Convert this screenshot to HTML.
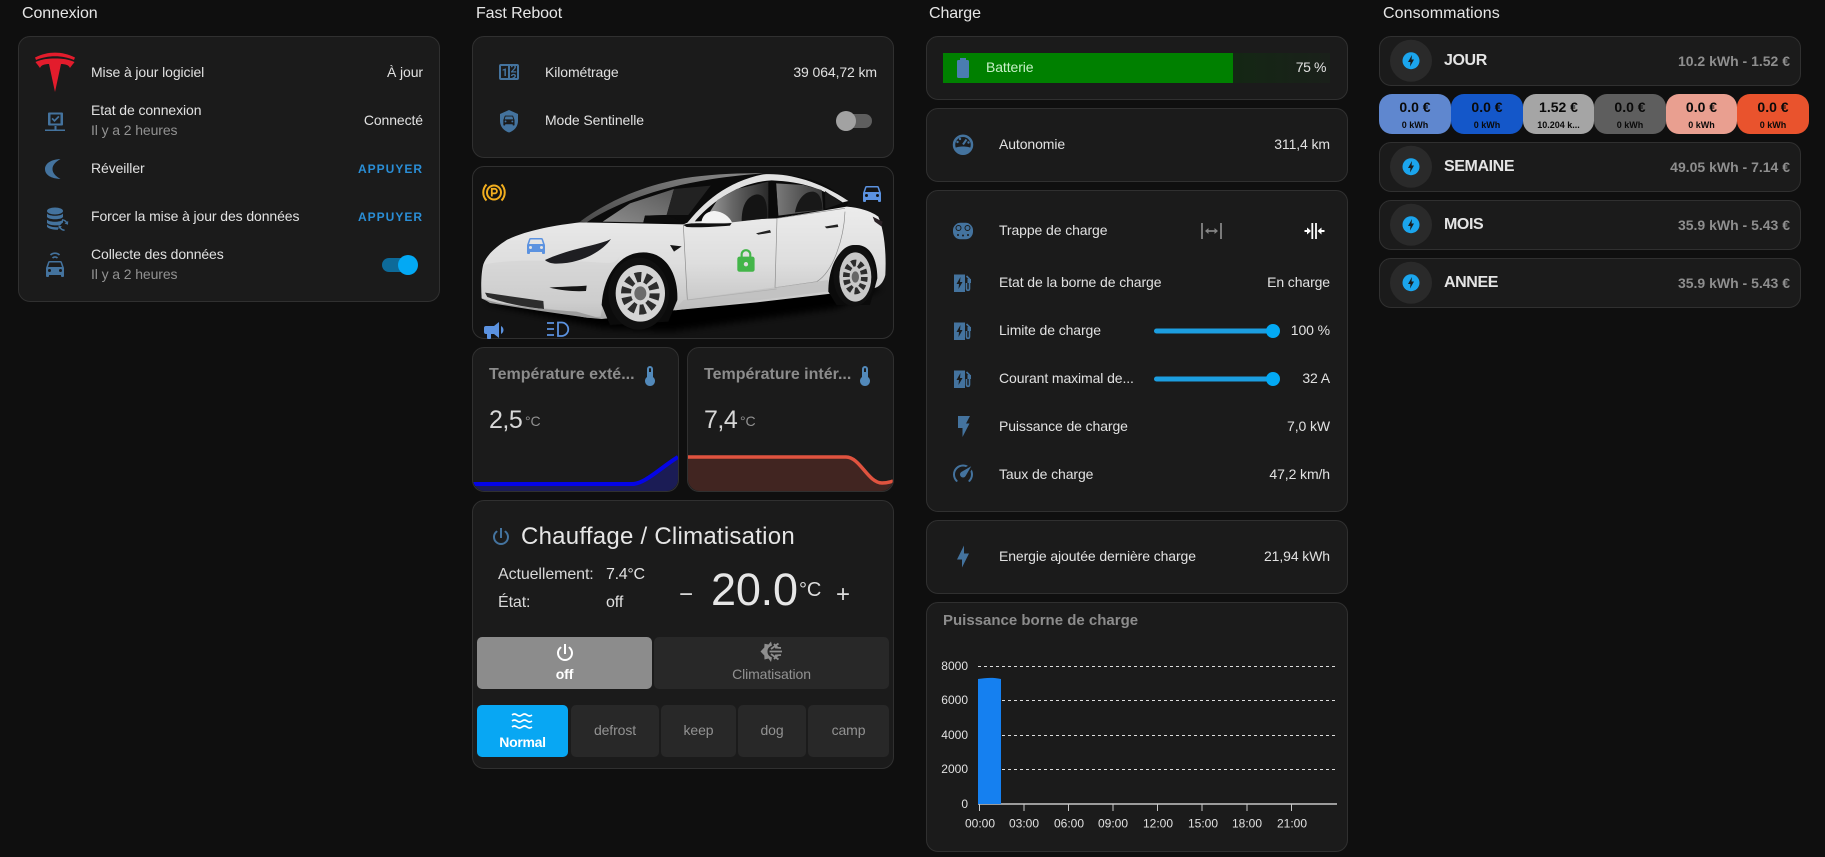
<!DOCTYPE html>
<html lang="fr"><head><meta charset="utf-8"><title>Tesla</title>
<style>
html,body{margin:0;padding:0;background:#0f0f0f}
body{position:relative;width:1825px;height:857px;overflow:hidden;font-family:"Liberation Sans",Arial,sans-serif;color:#e1e1e1}
.c{position:absolute;box-sizing:border-box;background:#1b1b1b;border:1px solid #303030;border-radius:12px}
.t{position:absolute;white-space:nowrap;line-height:20px;font-size:14px;height:20px;letter-spacing:-.1px}
.h{font-size:16px;color:#e6e6e6}
.g{color:#929292}
.b{font-size:12px;font-weight:bold;color:#2a8ed6;letter-spacing:1px}
.tt{font-size:16px;font-weight:bold;color:#8c8c8c;letter-spacing:0}
.ct{text-align:center}
.btn{position:absolute;border-radius:5px;background:#282828}
.n{font-size:16px;font-weight:bold;color:#e4e4e4;letter-spacing:-.4px}
.rv{font-size:14px;font-weight:bold;color:#8e8e8e;letter-spacing:0}
.pill{position:absolute;top:94px;height:40px;border-radius:13px;color:#0a0a0a;text-align:center}
.pill b{position:absolute;left:0;right:0;top:3px;font-size:14px;line-height:20px}
.pill span{position:absolute;left:0;right:0;top:24px;font-size:9px;font-weight:bold;line-height:14px}
svg{position:absolute;left:0;top:0}
</style></head><body>

<div class="t h" style="left:22px;top:4px">Connexion</div>
<div class="t h" style="left:476px;top:4px">Fast Reboot</div>
<div class="t h" style="left:929px;top:4px">Charge</div>
<div class="t h" style="left:1383px;top:4px;letter-spacing:.1px">Consommations</div>

<!-- cards -->
<div class="c" style="left:18px;top:36px;width:422px;height:266px"></div>
<div class="c" style="left:472px;top:36px;width:422px;height:122px"></div>
<div class="c" style="left:472px;top:166px;width:422px;height:173px;background:#131313"></div>
<div class="c" style="left:472px;top:347px;width:207px;height:145px"></div>
<div class="c" style="left:687px;top:347px;width:207px;height:145px"></div>
<div class="c" style="left:472px;top:500px;width:422px;height:269px"></div>
<div class="c" style="left:926px;top:36px;width:422px;height:64px"></div>
<div class="c" style="left:926px;top:108px;width:422px;height:74px"></div>
<div class="c" style="left:926px;top:190px;width:422px;height:322px"></div>
<div class="c" style="left:926px;top:520px;width:422px;height:74px"></div>
<div class="c" style="left:926px;top:602px;width:422px;height:250px"></div>
<div class="c" style="left:1379px;top:36px;width:422px;height:50px"></div>
<div class="c" style="left:1379px;top:142px;width:422px;height:50px"></div>
<div class="c" style="left:1379px;top:200px;width:422px;height:50px"></div>
<div class="c" style="left:1379px;top:258px;width:422px;height:50px"></div>

<!-- battery bar -->
<div style="position:absolute;left:943px;top:53px;width:290px;height:30px;background:#008000"></div>
<div style="position:absolute;left:1233px;top:53px;width:97px;height:30px;background:linear-gradient(90deg,#142714,#1a201a)"></div>

<!-- climate buttons -->
<div class="btn" style="left:477px;top:637px;width:175px;height:52px;background:#8c8c8c"></div>
<div class="btn" style="left:654px;top:637px;width:235px;height:52px"></div>
<div class="btn" style="left:477px;top:705px;width:91px;height:52px;background:#08a7f3"></div>
<div class="btn" style="left:571px;top:705px;width:88px;height:52px"></div>
<div class="btn" style="left:661px;top:705px;width:75px;height:52px"></div>
<div class="btn" style="left:738px;top:705px;width:68px;height:52px"></div>
<div class="btn" style="left:808px;top:705px;width:81px;height:52px"></div>

<!-- pills -->
<div class="pill" style="left:1379px;width:72px;background:#5f87cf"><b>0.0 €</b><span>0 kWh</span></div>
<div class="pill" style="left:1451px;width:72px;background:#1457c9"><b>0.0 €</b><span>0 kWh</span></div>
<div class="pill" style="left:1523px;width:71px;background:#a5a5a5"><b>1.52 €</b><span>10.204 k...</span></div>
<div class="pill" style="left:1594px;width:72px;background:#5e5e5e"><b>0.0 €</b><span>0 kWh</span></div>
<div class="pill" style="left:1666px;width:71px;background:#e99f90"><b>0.0 €</b><span>0 kWh</span></div>
<div class="pill" style="left:1737px;width:72px;background:#e9532d"><b>0.0 €</b><span>0 kWh</span></div>

<svg width="1825" height="857" viewBox="0 0 1825 857">
<defs>
<linearGradient id="bd" x1="0" y1="0" x2="0" y2="1"><stop offset="0" stop-color="#ececec"/><stop offset=".5" stop-color="#dedede"/><stop offset=".85" stop-color="#c8c8c8"/><stop offset="1" stop-color="#a8a8a8"/></linearGradient>
<linearGradient id="gl" x1="0" y1="1" x2="1" y2="0"><stop offset="0" stop-color="#8c8c8c"/><stop offset="1" stop-color="#5a5a5a"/></linearGradient>
<linearGradient id="gl2" x1="0" y1="0" x2="1" y2="0"><stop offset="0" stop-color="#a6a6a6"/><stop offset=".45" stop-color="#666"/><stop offset="1" stop-color="#2a2a2a"/></linearGradient>
<linearGradient id="gl3" x1="0" y1="0" x2="1" y2="0"><stop offset="0" stop-color="#7a7a7a"/><stop offset=".6" stop-color="#505050"/><stop offset="1" stop-color="#3a3a3a"/></linearGradient>
<linearGradient id="rf" x1="0" y1="1" x2="1" y2="0"><stop offset="0" stop-color="#4a4a4a"/><stop offset="1" stop-color="#8a8a8a"/></linearGradient>
<filter id="bl"><feGaussianBlur stdDeviation="10"/></filter>
<clipPath id="cc"><rect x="473" y="167" width="420" height="171" rx="12"/></clipPath>
<clipPath id="tc1"><rect x="473" y="348" width="205" height="143" rx="12"/></clipPath>
<clipPath id="tc2"><rect x="688" y="348" width="205" height="143" rx="12"/></clipPath>
</defs>

<!-- Tesla logo -->
<path fill="#e31c2c" d="M35,57.500C48,51 62,51 75,57.500L74,60C62,55 48,55 36,60Z"/>
<path fill="#e31c2c" d="M55,92L61,64C65,64 69,65 70,68C72,65 74,63 74.500,62C68,59 62,58.500 55,58.500C48,58.500 42,59 35.500,62C36,63 38,65 40,68C41,65 45,64 49,64Z"/>

<!-- connection -->
<g fill="#44739e">
<path fill-rule="evenodd" d="M49,112.500h13a1,1 0 0 1 1,1v11a1,1 0 0 1-1,1h-13a1,1 0 0 1-1-1v-11a1,1 0 0 1 1-1zM50.500,114.500v9h10v-9z"/>
<path d="M51.500,119l1.200-1.200 1.800,1.800 3.800-3.800 1.200,1.200-5,5zM54.500,126h2v3.500h-2zM45,129.500h20v1.500h-20z"/>
<path d="M60.500,159C51,159.500 45,163.500 45,169C45,175 51,178.500 60.500,179C55.500,176 52.500,173 52.500,169C52.500,165 55.500,162 60.500,159Z"/>
<ellipse cx="55" cy="211" rx="8" ry="3.500"/>
<path d="M47,213.500c2,3 14,3 16,0v3.500c-2,3-14,3-16,0zM47,219.500c2,3 14,3 16,0v3c-1,.5-2,1.500-2.500,2.500c-4,.8-11,.5-13.500-2zM47,224.500c2,2 6,2.800 11,2.800v2.500c-5,0-9.500-1-11-3z"/>
<path d="M62,220.500a4.800,4.800 0 0 1 3.800,2.200l-1.300,.8 3.500,1.200 .2-3.700-1.200,.8a6.300,6.300 0 0 0-5-2.700zM62,226.500l-3.400-1.200-.2,3.700 1.200-.8a6.300,6.300 0 0 0 5,2.700v-1.400a4.800,4.800 0 0 1-3.800-2.200z" />
</g>
<g transform="translate(43,256)" fill="#44739e"><path d="M5,11L6.500,6.500H17.500L19,11M17.500,16A1.500,1.500 0 0,1 16,14.500A1.500,1.500 0 0,1 17.500,13A1.500,1.500 0 0,1 19,14.500A1.500,1.500 0 0,1 17.500,16M6.500,16A1.500,1.500 0 0,1 5,14.500A1.500,1.500 0 0,1 6.500,13A1.500,1.500 0 0,1 8,14.500A1.500,1.500 0 0,1 6.500,16M18.920,6C18.720,5.420 18.160,5 17.500,5H6.500C5.840,5 5.280,5.420 5.080,6L3,12V20A1,1 0 0,0 4,21H5A1,1 0 0,0 6,20V19H18V20A1,1 0 0,0 19,21H20A1,1 0 0,0 21,20V12L18.920,6Z"/></g>
<path d="M50.500,255a6.500,6.500 0 0 1 9,0M52.500,258a3.500,3.500 0 0 1 5,0" fill="none" stroke="#44739e" stroke-width="1.700"/>

<!-- toggles -->
<rect x="382" y="258" width="32" height="14" rx="7" fill="#0d6a99"/><circle cx="408" cy="265" r="10" fill="#03a9f4"/>
<rect x="846" y="114" width="26" height="14" rx="7" fill="#5e5e5e"/><circle cx="846" cy="121" r="10" fill="#a2a2a2"/>

<!-- counter -->
<g transform="translate(497,60)" fill="#44739e"><path d="M4,4H20A2,2 0 0,1 22,6V18A2,2 0 0,1 20,20H4A2,2 0 0,1 2,18V6A2,2 0 0,1 4,4M4,6V18H11V6H4M20,18V6H18.760C19,6.540 18.950,7.070 18.950,7.130C18.880,7.800 18.410,8.500 18.240,8.750L15.910,11.300L19.230,11.280L19.240,12.500L14.040,12.470L14,11.470C14,11.470 17.050,8.240 17.200,7.950C17.340,7.670 17.910,6 16.500,6C15.270,6.050 15.410,7.300 15.410,7.300L13.870,7.310C13.870,7.310 13.880,6.650 14.250,6H13V18H15.580L15.570,17.140L16.540,17.130C16.540,17.130 17.450,16.970 17.460,16.080C17.500,15.080 16.650,15.080 16.500,15.080C16.370,15.080 15.430,15.130 15.430,15.950H13.910C13.910,15.950 13.950,13.890 16.500,13.890C19.100,13.890 18.960,15.910 18.960,15.910C18.960,15.910 19,17.160 17.850,17.630L18.370,18H20M8.920,16H7.420V10.200L5.620,10.760V9.530L8.760,8.410H8.920V16Z"/></g>
<!-- shield car -->
<path fill="#44739e" d="M509,110L500,114V121C500,126.500 504,131 509,132.500C514,131 518,126.500 518,121V114Z"/>
<g transform="translate(501.500,112.500) scale(.62)" fill="#1b1b1b"><path d="M5,11L6.500,6.500H17.500L19,11M17.500,16A1.500,1.500 0 0,1 16,14.500A1.500,1.500 0 0,1 17.500,13A1.500,1.500 0 0,1 19,14.500A1.500,1.500 0 0,1 17.500,16M6.500,16A1.500,1.500 0 0,1 5,14.500A1.500,1.500 0 0,1 6.500,13A1.500,1.500 0 0,1 8,14.500A1.500,1.500 0 0,1 6.500,16M18.920,6C18.720,5.420 18.160,5 17.500,5H6.500C5.840,5 5.280,5.420 5.080,6L3,12V20A1,1 0 0,0 4,21H5A1,1 0 0,0 6,20V19H18V20A1,1 0 0,0 19,21H20A1,1 0 0,0 21,20V12L18.920,6Z"/></g>

<!-- car -->
<g clip-path="url(#cc)">
<g transform="translate(470,165) scale(.33333)">
<path d="M40 415L400 490L600 500L1100 430L1240 370L1000 360L300 400Z" fill="#040404" filter="url(#bl)"/>
<!-- greenhouse black -->
<path d="M330 172C420 100 530 62 640 42C760 24 900 20 1000 38C1060 50 1110 85 1135 112L1125 135L920 165L640 180Z" fill="#0b0b0b"/>
<path d="M330 170C420 102 530 60 640 40C720 28 800 24 880 25C760 34 640 52 530 88C450 115 390 145 350 172Z" fill="url(#rf)"/>
<!-- body -->
<path d="M35 400C32 360 34 320 40 298C50 270 75 248 110 225C170 195 260 180 330 172L640 178L660 170L920 160L1130 125C1170 128 1205 140 1225 155C1240 190 1250 250 1246 330C1240 355 1225 368 1210 370L1090 385L860 412L610 436L590 442L395 462L350 458L200 432L60 412Z" fill="url(#bd)"/>
<path d="M40 300C90 285 200 285 350 290C420 295 440 300 450 270C430 330 400 400 392 455L350 458L300 440C230 430 150 420 60 412L35 400Z" fill="#d2d2d2" opacity=".55"/>
<!-- windshield -->
<path d="M398 170L480 115L612 72L590 150L525 152L520 172Z" fill="url(#gl)"/>
<path d="M612 72L722 62L655 150L590 150Z" fill="#222"/>
<path d="M525 152L590 150L640 172L520 172Z" fill="#0c0c0c"/>
<!-- A pillar + roof -->
<path d="M645 182C700 112 770 50 880 28C950 24 1040 44 1135 108L1118 112C1060 72 1000 50 905 46C805 52 722 112 672 172Z" fill="#e2e2e2"/>
<!-- side windows -->
<path d="M700 172L742 105L800 72L895 50L895 160L785 172Z" fill="url(#gl2)"/>
<path d="M815 168C815 130 825 95 860 88C885 88 892 110 892 160Z" fill="#141414"/>
<path d="M918 55L1000 60L1055 75L1060 135L925 152Z" fill="url(#gl3)"/>
<path d="M975 142C980 110 1000 78 1030 80C1052 84 1056 110 1058 134Z" fill="#181818"/>
<path d="M1065 78L1116 114L1066 132Z" fill="#1a1a1a"/>
<path d="M897 48H918L925 155L895 160Z" fill="#0a0a0a"/>
<path d="M640 180C660 170 720 178 785 174L780 182C730 186 690 188 650 186Z" fill="#111"/>
<path d="M694 174C696 152 710 138 735 138C758 140 778 155 786 172Z" fill="#f3f3f3"/>
<path d="M225 285C300 250 390 240 423 222C400 255 340 295 260 296C245 296 232 292 225 285Z" fill="#1e1e22"/>
<path d="M238 368C280 378 320 380 348 378L350 362C310 365 270 365 238 368Z" fill="#151515"/>
<path d="M45 383L220 408L222 432C150 425 90 410 52 396Z" fill="#2c2c2c"/>
<path d="M38 400C90 420 200 432 320 440L392 460L350 458L200 436L60 414Z" fill="#9c9c9c"/>
<path d="M600 240L635 244L612 260Z" fill="#151515"/>
<path d="M858 205L900 195L903 203L865 209Z M1064 185L1103 178L1105 186L1070 190Z" fill="#222"/>
<path d="M1208 155L1238 170L1234 184L1214 170Z" fill="#2a2226"/>
<path d="M640 180L652 405M921 160L915 370M921 160L1125 130M1125 140C1122 220 1090 320 1040 350L915 368M652 405L920 372" stroke="#8b8b8b" stroke-width="2" fill="none"/>
<path d="M615 436L1085 378L1075 345L640 405Z" fill="#bdbdbd" opacity=".7"/>
<!-- front wheel -->
<path d="M395 420C400 330 450 262 520 262C590 262 625 330 622 405L595 470L420 480Z" fill="#0b0b0b"/>
<ellipse cx="506" cy="386" rx="91" ry="108" fill="#101010"/>
<ellipse cx="511" cy="385" rx="74" ry="85" fill="#d4d4d4"/>
<ellipse cx="511" cy="385" rx="43" ry="49" fill="none" stroke="#2c2c2c" stroke-width="30" pathLength="100" stroke-dasharray="6 4"/>
<ellipse cx="511" cy="385" rx="18" ry="21" fill="#6a6a6a"/>
<!-- rear wheel -->
<path d="M1075 380C1075 300 1110 240 1160 240C1205 240 1222 290 1222 340L1200 420H1100Z" fill="#0b0b0b"/>
<ellipse cx="1152" cy="332" rx="62" ry="92" fill="#101010"/>
<ellipse cx="1156" cy="336" rx="48" ry="74" fill="#c8c8c8"/>
<ellipse cx="1156" cy="336" rx="27" ry="42" fill="none" stroke="#2c2c2c" stroke-width="20" pathLength="100" stroke-dasharray="6 4"/>
<ellipse cx="1156" cy="336" rx="11" ry="17" fill="#666"/>
</g>
</g>

<!-- car icons -->
<g transform="translate(524,233)" fill="#5b92e0"><path d="M5,11L6.500,6.500H17.500L19,11M17.500,16A1.500,1.500 0 0,1 16,14.500A1.500,1.500 0 0,1 17.500,13A1.500,1.500 0 0,1 19,14.500A1.500,1.500 0 0,1 17.500,16M6.500,16A1.500,1.500 0 0,1 5,14.500A1.500,1.500 0 0,1 6.500,13A1.500,1.500 0 0,1 8,14.500A1.500,1.500 0 0,1 6.500,16M18.920,6C18.720,5.420 18.160,5 17.500,5H6.500C5.840,5 5.280,5.420 5.080,6L3,12V20A1,1 0 0,0 4,21H5A1,1 0 0,0 6,20V19H18V20A1,1 0 0,0 19,21H20A1,1 0 0,0 21,20V12L18.920,6Z"/></g>
<g transform="translate(860,181)" fill="#5b92e0"><path d="M5,11L6.500,6.500H17.500L19,11M17.500,16A1.500,1.500 0 0,1 16,14.500A1.500,1.500 0 0,1 17.500,13A1.500,1.500 0 0,1 19,14.500A1.500,1.500 0 0,1 17.500,16M6.500,16A1.500,1.500 0 0,1 5,14.500A1.500,1.500 0 0,1 6.500,13A1.500,1.500 0 0,1 8,14.500A1.500,1.500 0 0,1 6.500,16M18.920,6C18.720,5.420 18.160,5 17.500,5H6.500C5.840,5 5.280,5.420 5.080,6L3,12V20A1,1 0 0,0 4,21H5A1,1 0 0,0 6,20V19H18V20A1,1 0 0,0 19,21H20A1,1 0 0,0 21,20V12L18.920,6Z"/></g>
<g transform="translate(733,248)" fill="#43b549"><path transform="scale(1.080)" d="M12,17A2,2 0 0,0 14,15C14,13.890 13.100,13 12,13A2,2 0 0,0 10,15A2,2 0 0,0 12,17M18,8A2,2 0 0,1 20,10V20A2,2 0 0,1 18,22H6A2,2 0 0,1 4,20V10C4,8.890 4.900,8 6,8H7V6A5,5 0 0,1 12,1A5,5 0 0,1 17,6V8H18M12,3A3,3 0 0,0 9,6V8H15V6A3,3 0 0,0 12,3Z"/></g>
<g fill="none" stroke="#f2ae1e" stroke-width="2">
<circle cx="494" cy="192.500" r="7"/>
<path d="M486.500,184.500a11.500,11.500 0 0 0 0,16M501.500,184.500a11.500,11.500 0 0 1 0,16"/>
<path d="M491.800,196.500V188.800h2.800a2.200,2.200 0 0 1 0,4.600h-2.800" stroke-width="1.800"/>
</g>
<g transform="translate(482,318)" fill="#5b92e0"><path d="M12,8H4A2,2 0 0,0 2,10V14A2,2 0 0,0 4,16H5V20A1,1 0 0,0 6,21H8A1,1 0 0,0 9,20V16H12L17,20V4L12,8M21.500,12C21.500,13.710 20.540,15.260 19,16V8C20.530,8.750 21.500,10.300 21.500,12Z"/></g>
<g fill="none" stroke="#5b92e0" stroke-width="1.800">
<path d="M558,322.500h3.500a6.500,6.500 0 0 1 0,13.500h-3.500zM547,323h7M547,329h7M547,335h7"/>
</g>

<!-- thermometers -->
<g fill="#5289ba"><path transform="translate(638,364)" d="M15 13V5A3 3 0 0 0 9 5V13A5 5 0 1 0 15 13M12 4A1 1 0 0 1 13 5V8H11V5A1 1 0 0 1 12 4Z"/>
<path transform="translate(853,364)" d="M15 13V5A3 3 0 0 0 9 5V13A5 5 0 1 0 15 13M12 4A1 1 0 0 1 13 5V8H11V5A1 1 0 0 1 12 4Z"/></g>

<!-- temp graphs -->
<g clip-path="url(#tc1)">
<path d="M472,484H632C645,484 660,468 678,457V492H472Z" fill="#1b1c55"/>
<path d="M472,484H632C645,484 660,468 678,457" fill="none" stroke="#0505e6" stroke-width="4"/>
</g>
<g clip-path="url(#tc2)">
<path d="M687,457H846C860,457 868,483 882,483C888,483 890,482 893,481V492H687Z" fill="#412521"/>
<path d="M687,457H846C860,457 868,483 882,483C888,483 890,482 893,481" fill="none" stroke="#e0533f" stroke-width="3.500"/>
</g>

<!-- climate icons -->
<path transform="translate(489,525)" fill="#44739e" d="M16.560,5.440L15.110,6.890C16.840,7.940 18,9.830 18,12A6,6 0 0,1 12,18A6,6 0 0,1 6,12C6,9.830 7.160,7.940 8.880,6.880L7.440,5.440C5.360,6.880 4,9.280 4,12A8,8 0 0,0 12,20A8,8 0 0,0 20,12C20,9.280 18.640,6.880 16.560,5.440M13,3H11V13H13"/>
<path transform="translate(553,641)" fill="#fff" d="M16.560,5.440L15.110,6.890C16.840,7.940 18,9.830 18,12A6,6 0 0,1 12,18A6,6 0 0,1 6,12C6,9.830 7.160,7.940 8.880,6.880L7.440,5.440C5.360,6.880 4,9.280 4,12A8,8 0 0,0 12,20A8,8 0 0,0 20,12C20,9.280 18.640,6.880 16.560,5.440M13,3H11V13H13"/>
<path fill="#8e8e8e" d="M771,641.500L768.500,644.500L764.500,643.800L764.300,647.500L760.500,651.500L764.300,655.500L764.500,659.500L768.500,658.500L771,662L772,657.500C768.500,656 767.500,654 767.500,651.500C767.500,649 768.500,647 772,645.500Z"/>
<g stroke="#8e8e8e" fill="none" stroke-width="1.800">
<path d="M769.500,651.500H782M771,649L778.500,643.500M771,654L778.500,659.500M775,647.500L781,648M775,655.500L781,655M774,644L778,648M774,659L778,655"/>
</g>
<g stroke="#fff" stroke-width="1.600" fill="none">
<path d="M512,715q2.500,-2 5,0t5,0t5,0t5,0M512,721q2.500,-2 5,0t5,0t5,0t5,0M512,727q2.500,-2 5,0t5,0t5,0t5,0"/>
</g>

<!-- battery, gauges etc -->
<path transform="translate(951,56)" fill="#4a7db0" d="M16.670,4H15V2H9V4H7.330A1.330,1.330 0 0,0 6,5.330V20.670C6,21.400 6.600,22 7.330,22H16.670A1.330,1.330 0 0,0 18,20.670V5.330C18,4.600 17.400,4 16.670,4Z"/>
<circle cx="963" cy="144.800" r="9" fill="none" stroke="#44739e" stroke-width="2.500"/>
<path fill="#44739e" d="M955,148C958,146 968,146 971,148C970,152 966,153.500 963,153.500C960,153.500 956,152 955,148Z"/>
<path d="M963,144.500L966.500,139.500" stroke="#44739e" stroke-width="2"/><circle cx="957.500" cy="142" r="1.200" fill="#44739e"/><circle cx="960" cy="139" r="1.200" fill="#44739e"/><circle cx="968.500" cy="142.500" r="1.200" fill="#44739e"/>
<!-- type2 plug -->
<rect x="953" y="222.800" width="20" height="16.500" rx="7.500" fill="#44739e"/>
<g fill="none" stroke="#1b1b1b" stroke-width="1"><circle cx="958.500" cy="228" r="2.500"/><circle cx="967.500" cy="228" r="2.500"/></g>
<g fill="#1b1b1b"><circle cx="958" cy="235" r="1"/><circle cx="963" cy="235.500" r="1"/><circle cx="968" cy="235" r="1"/></g>
<!-- trappe arrows -->
<g stroke="#848484" stroke-width="1.800" fill="none"><path d="M1202,223V239M1221,223V239M1206,231H1217"/></g>
<path d="M1205,231l3.500-3v6zM1218,231l-3.500-3v6z" fill="#848484"/>
<g stroke="#fff" stroke-width="1.800" fill="none"><path d="M1312.300,223V239M1316,223V239"/><path d="M1304.500,231H1309M1319.500,231H1324.500" stroke-width="2"/></g>
<path d="M1311,231l-4-3.500v7zM1317.500,231l4-3.500v7z" fill="#fff"/>
<!-- ev station icons -->
<g id="ev">
<g transform="translate(951,271)"><path fill="#44739e" d="M3,3.500H14V21H3Z"/><path fill="#1b1b1b" d="M9.500,6L5.500,13H8L7.500,18L11.500,11H9Z"/><path fill="none" stroke="#44739e" stroke-width="1.600" d="M15.500,5L18.500,8V17.500C18.500,20 15.500,20 15.500,17.500V12"/><rect x="16.500" y="8" width="3.500" height="4" fill="#44739e"/></g>
<g transform="translate(951,319)"><path fill="#44739e" d="M3,3.500H14V21H3Z"/><path fill="#1b1b1b" d="M9.500,6L5.500,13H8L7.500,18L11.500,11H9Z"/><path fill="none" stroke="#44739e" stroke-width="1.600" d="M15.500,5L18.500,8V17.500C18.500,20 15.500,20 15.500,17.500V12"/><rect x="16.500" y="8" width="3.500" height="4" fill="#44739e"/></g>
<g transform="translate(951,367)"><path fill="#44739e" d="M3,3.500H14V21H3Z"/><path fill="#1b1b1b" d="M9.500,6L5.500,13H8L7.500,18L11.500,11H9Z"/><path fill="none" stroke="#44739e" stroke-width="1.600" d="M15.500,5L18.500,8V17.500C18.500,20 15.500,20 15.500,17.500V12"/><rect x="16.500" y="8" width="3.500" height="4" fill="#44739e"/></g>
</g>
<path fill="#44739e" d="M958,416H970L966,423.500H969.500L962.500,437V428H958Z"/>
<path transform="translate(951,461.500)" fill="#44739e" d="M12,16A3,3 0 0,1 9,13C9,11.880 9.610,10.900 10.500,10.390L20.210,4.770L14.680,14.350C14.180,15.330 13.170,16 12,16M12,3C13.810,3 15.500,3.500 16.970,4.320L14.870,5.530C14,5.190 13,5 12,5A8,8 0 0,0 4,13C4,15.210 4.890,17.210 6.340,18.650H6.350C6.740,19.040 6.740,19.670 6.350,20.060C5.960,20.450 5.320,20.450 4.930,20.070V20.070C3.120,18.260 2,15.760 2,13A10,10 0 0,1 12,3M22,13C22,15.760 20.880,18.260 19.070,20.070V20.070C18.680,20.450 18.050,20.450 17.660,20.060C17.270,19.670 17.270,19.040 17.660,18.650V18.650C19.110,17.200 20,15.210 20,13C20,12 19.810,11 19.460,10.100L20.670,8C21.500,9.500 22,11.140 22,13Z"/>
<path transform="translate(951,544.500)" fill="#44739e" d="M11 15H6L13 1V9H18L11 23V15Z"/>

<!-- sliders -->
<rect x="1154" y="328.500" width="119" height="5" rx="2.500" fill="#1c9ee0"/><circle cx="1273" cy="331" r="7" fill="#03a9f4"/>
<rect x="1154" y="376.500" width="119" height="5" rx="2.500" fill="#1c9ee0"/><circle cx="1273" cy="379" r="7" fill="#03a9f4"/>

<!-- chart -->
<g stroke="#dcdcdc" stroke-width="1" stroke-dasharray="3 3" fill="none">
<path d="M978,666.500H1337M1002,700.500H1337M1002,735.500H1337M1002,769.500H1337"/></g>
<path d="M978,804H1337" stroke="#c8c8c8" stroke-width="1.500"/>
<path d="M978,679C985,678 992,677 1001,679V804H978Z" fill="#1580f0"/>
<g stroke="#c8c8c8"><path d="M979.500,804v7M1024,804v7M1068.500,804v7M1113,804v7M1157.500,804v7M1202,804v7M1247,804v7M1291.500,804v7"/></g>
<g font-family="'Liberation Sans',Arial,sans-serif" font-size="12" fill="#e0e0e0" text-anchor="end">
<text x="968" y="670">8000</text><text x="968" y="704">6000</text><text x="968" y="739">4000</text><text x="968" y="773">2000</text><text x="968" y="808">0</text>
</g>
<g font-family="'Liberation Sans',Arial,sans-serif" font-size="12" fill="#e0e0e0" text-anchor="middle">
<text x="980" y="827.500">00:00</text><text x="1024" y="827.500">03:00</text><text x="1069" y="827.500">06:00</text><text x="1113" y="827.500">09:00</text><text x="1158" y="827.500">12:00</text><text x="1203" y="827.500">15:00</text><text x="1247" y="827.500">18:00</text><text x="1292" y="827.500">21:00</text>
</g>

<!-- conso icons -->
<g id="ci">
<circle cx="1411" cy="60.700" r="21" fill="#2a2a2a"/><circle cx="1411" cy="60.700" r="8.500" fill="#1ba5ed"/><path d="M1412,55L1408,62H1410.500L1410,66.500L1414,59.500H1411.500Z" fill="#1b1b1b"/>
<circle cx="1411" cy="166.700" r="21" fill="#2a2a2a"/><circle cx="1411" cy="166.700" r="8.500" fill="#1ba5ed"/><path d="M1412,161L1408,168H1410.500L1410,172.500L1414,165.500H1411.500Z" fill="#1b1b1b"/>
<circle cx="1411" cy="224.700" r="21" fill="#2a2a2a"/><circle cx="1411" cy="224.700" r="8.500" fill="#1ba5ed"/><path d="M1412,219L1408,226H1410.500L1410,230.500L1414,223.500H1411.500Z" fill="#1b1b1b"/>
<circle cx="1411" cy="282.700" r="21" fill="#2a2a2a"/><circle cx="1411" cy="282.700" r="8.500" fill="#1ba5ed"/><path d="M1412,277L1408,284H1410.500L1410,288.500L1414,281.500H1411.500Z" fill="#1b1b1b"/>
</g>
</svg>

<!-- col 1 text -->
<div class="t" style="left:91px;top:62px">Mise à jour logiciel</div>
<div class="t" style="right:1402px;top:62px">À jour</div>
<div class="t" style="left:91px;top:100px">Etat de connexion</div>
<div class="t g" style="left:91px;top:120px">Il y a 2 heures</div>
<div class="t" style="right:1402px;top:110px">Connecté</div>
<div class="t" style="left:91px;top:158px">Réveiller</div>
<div class="t b" style="right:1402px;top:158.500px">APPUYER</div>
<div class="t" style="left:91px;top:206px">Forcer la mise à jour des données</div>
<div class="t b" style="right:1402px;top:206.500px">APPUYER</div>
<div class="t" style="left:91px;top:244px">Collecte des données</div>
<div class="t g" style="left:91px;top:264px">Il y a 2 heures</div>

<!-- col 2 text -->
<div class="t" style="left:545px;top:62px">Kilométrage</div>
<div class="t" style="right:948px;top:62px">39 064,72 km</div>
<div class="t" style="left:545px;top:110px">Mode Sentinelle</div>
<div class="t tt" style="left:489px;top:365px">Température exté...</div>
<div class="t tt" style="left:704px;top:365px">Température intér...</div>
<div class="t" style="left:489px;top:409px;font-size:25px;line-height:22px;height:22px;color:#d8d8d8;letter-spacing:-.5px">2,5</div>
<div class="t g" style="left:525px;top:411px">°C</div>
<div class="t" style="left:704px;top:409px;font-size:25px;line-height:22px;height:22px;color:#d8d8d8;letter-spacing:-.5px">7,4</div>
<div class="t g" style="left:740px;top:411px">°C</div>
<div class="t" style="left:521px;top:522px;font-size:24px;line-height:30px;height:30px;color:#e6e6e6;letter-spacing:.25px">Chauffage / Climatisation</div>
<div class="t" style="left:498px;top:565px;font-size:16px;color:#d8d8d8">Actuellement:</div>
<div class="t" style="left:606px;top:565px;font-size:16px;letter-spacing:-.3px">7.4°C</div>
<div class="t" style="left:498px;top:593px;font-size:16px;color:#d8d8d8">État:</div>
<div class="t" style="left:606px;top:593px;font-size:16px">off</div>
<div class="t" style="left:679px;top:580px;font-size:24px;line-height:30px;height:30px;color:#ddd">−</div>
<div class="t" style="left:711px;top:565px;font-size:45px;line-height:50px;height:50px;color:#e6e6e6;letter-spacing:-.2px">20.0</div>
<div class="t" style="left:799px;top:578px;font-size:20px;line-height:24px;height:24px;color:#ddd">°C</div>
<div class="t" style="left:836px;top:580px;font-size:24px;line-height:30px;height:30px;color:#ddd">+</div>
<div class="t ct" style="left:477px;width:175px;top:664px;color:#fff;font-weight:bold">off</div>
<div class="t ct g" style="left:654px;width:235px;top:664px">Climatisation</div>
<div class="t ct" style="left:477px;width:91px;top:732px;color:#fff;font-weight:bold;letter-spacing:-.3px">Normal</div>
<div class="t ct g" style="left:571px;width:88px;top:720px">defrost</div>
<div class="t ct g" style="left:661px;width:75px;top:720px">keep</div>
<div class="t ct g" style="left:738px;width:68px;top:720px">dog</div>
<div class="t ct g" style="left:808px;width:81px;top:720px">camp</div>

<!-- col 3 text -->
<div class="t" style="left:986px;top:57px;color:#c8f0c8">Batterie</div>
<div class="t" style="right:499px;top:57px;letter-spacing:-.4px">75 %</div>
<div class="t" style="left:999px;top:134px">Autonomie</div>
<div class="t" style="right:495px;top:134px">311,4 km</div>
<div class="t" style="left:999px;top:220px">Trappe de charge</div>
<div class="t" style="left:999px;top:272px">Etat de la borne de charge</div>
<div class="t" style="right:495px;top:272px">En charge</div>
<div class="t" style="left:999px;top:320px">Limite de charge</div>
<div class="t" style="right:495px;top:320px">100 %</div>
<div class="t" style="left:999px;top:368px">Courant maximal de...</div>
<div class="t" style="right:495px;top:368px">32 A</div>
<div class="t" style="left:999px;top:416px">Puissance de charge</div>
<div class="t" style="right:495px;top:416px">7,0 kW</div>
<div class="t" style="left:999px;top:464px">Taux de charge</div>
<div class="t" style="right:495px;top:464px">47,2 km/h</div>
<div class="t" style="left:999px;top:546px">Energie ajoutée dernière charge</div>
<div class="t" style="right:495px;top:546px">21,94 kWh</div>
<div class="t tt" style="left:943px;top:611px;font-size:15px">Puissance borne de charge</div>

<!-- col 4 text -->
<div class="t n" style="left:1444px;top:51px">JOUR</div>
<div class="t rv" style="right:35px;top:51px">10.2 kWh - 1.52 €</div>
<div class="t n" style="left:1444px;top:157px">SEMAINE</div>
<div class="t rv" style="right:35px;top:157px">49.05 kWh - 7.14 €</div>
<div class="t n" style="left:1444px;top:215px">MOIS</div>
<div class="t rv" style="right:35px;top:215px">35.9 kWh - 5.43 €</div>
<div class="t n" style="left:1444px;top:273px">ANNEE</div>
<div class="t rv" style="right:35px;top:273px">35.9 kWh - 5.43 €</div>

</body></html>
